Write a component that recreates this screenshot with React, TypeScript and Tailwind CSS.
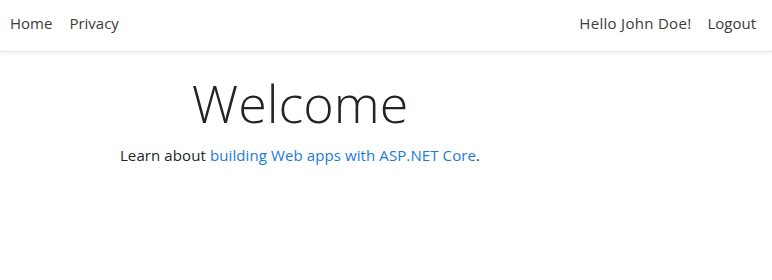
import React from 'react';

// Navigasi atas: tautan kiri dan sapaan pengguna di kanan.
const NavBar: React.FC = () => {
    return (
        <header className="h-[52px] border-b border-[#e5e5e5] shadow-[0_2px_5px_rgba(0,0,0,0.05)] bg-white">
            <nav className="h-full flex items-center justify-between px-[10px] pb-[4px] text-[15px] text-[#3b3b3b]">
                <ul className="flex items-center gap-[17px]">
                    <li><a href="#" className="hover:text-black">Home</a></li>
                    <li><a href="#" className="hover:text-black">Privacy</a></li>
                </ul>
                <ul className="flex items-center gap-[16px] pr-[6px]">
                    <li><span className="tracking-[0.3px]">Hello John Doe!</span></li>
                    <li><a href="#" className="hover:text-black">Logout</a></li>
                </ul>
            </nav>
        </header>
    );
};

export default function App() {
    return (
        <div className="min-h-[280px] bg-white font-['Open_Sans',sans-serif] text-[#212529]">
            <NavBar />
            <main className="w-[600px] pt-[20px] text-center">
                <h1 className="text-[52px] font-light leading-[1.2] text-[#212529]">Welcome</h1>
                <p className="mt-[10px] text-[15px] tracking-[0.1px]">
                    Learn about <a href="#" className="text-[#1b7ad8]">building Web apps with ASP.NET Core</a>.
                </p>
            </main>
        </div>
    );
}
